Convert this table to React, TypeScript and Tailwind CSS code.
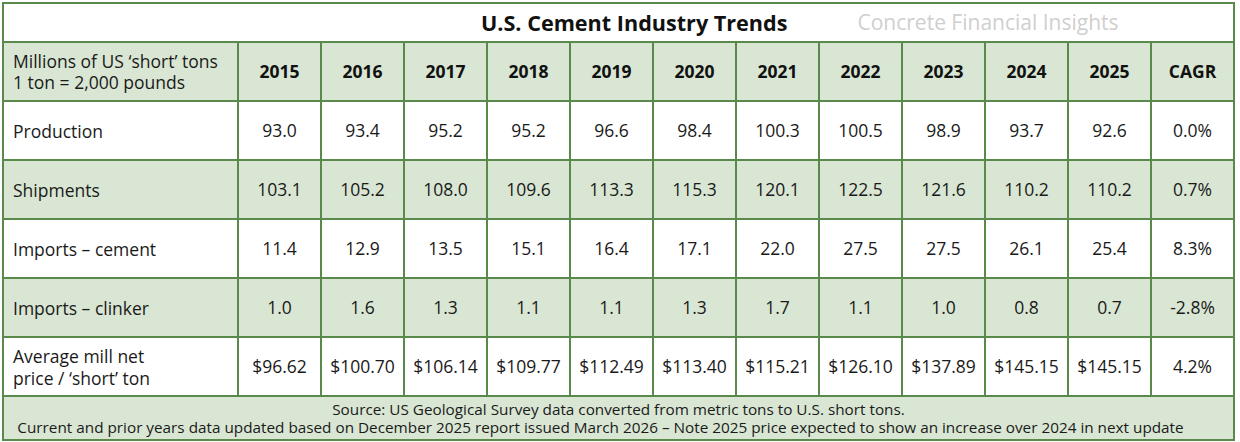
import React from "react";

const years = ["2015","2016","2017","2018","2019","2020","2021","2022","2023","2024","2025","CAGR"];
const rows: { label: React.ReactNode; vals: string[]; green: boolean }[] = [
  { label: "Production", vals: ["93.0","93.4","95.2","95.2","96.6","98.4","100.3","100.5","98.9","93.7","92.6","0.0%"], green: false },
  { label: "Shipments", vals: ["103.1","105.2","108.0","109.6","113.3","115.3","120.1","122.5","121.6","110.2","110.2","0.7%"], green: true },
  { label: "Imports \u2013 cement", vals: ["11.4","12.9","13.5","15.1","16.4","17.1","22.0","27.5","27.5","26.1","25.4","8.3%"], green: false },
  { label: "Imports \u2013 clinker", vals: ["1.0","1.6","1.3","1.1","1.1","1.3","1.7","1.1","1.0","0.8","0.7","-2.8%"], green: true },
  { label: <>Average mill net<br />price / {"\u2018short\u2019"} ton</>, vals: ["$96.62","$100.70","$106.14","$109.77","$112.49","$113.40","$115.21","$126.10","$137.89","$145.15","$145.15","4.2%"], green: false },
];

export default function App() {
  return (
    <div className="w-[1240px] h-[442px] bg-white" style={{ fontFamily: '"Open Sans", "Noto Sans", sans-serif' }}>
      <div className="ml-[2px] mt-[2px] w-[1233px] p-[2px] bg-[#5a8a4b] grid grid-cols-[233px_repeat(12,81px)] gap-[2px] text-[#1a1a1a]">
        <div className="col-span-13 h-[37px] bg-white flex items-center">
          <span className="ml-[477px] text-[21.6px] font-bold text-[#111] leading-none">U.S. Cement Industry Trends</span>
          <span className="ml-[70px] text-[21px] text-[#cfcfcf] leading-none">Concrete Financial Insights</span>
        </div>
        <div className="h-[57px] bg-[#d9e6d3] flex flex-col justify-center pl-[9px] text-[17.5px] leading-[21px]">
          <div>Millions of US {"\u2018short\u2019"} tons</div>
          <div>1 ton = 2,000 pounds</div>
        </div>
        {years.map((y) => (
          <div key={y} className="h-[57px] bg-[#d9e6d3] flex items-center justify-center text-[17.5px] font-bold text-[#111]">{y}</div>
        ))}
        {rows.map((r, i) => (
          <React.Fragment key={i}>
            <div className={`h-[57px] ${r.green ? "bg-[#d9e6d3]" : "bg-white"} flex items-center pl-[9px] text-[17.5px] leading-[22px]`}>
              <div>{r.label}</div>
            </div>
            {r.vals.map((v, j) => (
              <div key={j} className={`h-[57px] ${r.green ? "bg-[#d9e6d3]" : "bg-white"} flex items-center justify-center text-[17.5px]`}>{v}</div>
            ))}
          </React.Fragment>
        ))}
        <div className="col-span-13 h-[42px] bg-[#d9e6d3] flex flex-col items-center justify-center text-[15.3px] leading-[18px]">
          <div>Source: US Geological Survey data converted from metric tons to U.S. short tons.</div>
          <div className="mr-[36px]">Current and prior years data updated based on December 2025 report issued March 2026 {"\u2013"} Note 2025 price expected to show an increase over 2024 in next update</div>
        </div>
      </div>
    </div>
  );
}
